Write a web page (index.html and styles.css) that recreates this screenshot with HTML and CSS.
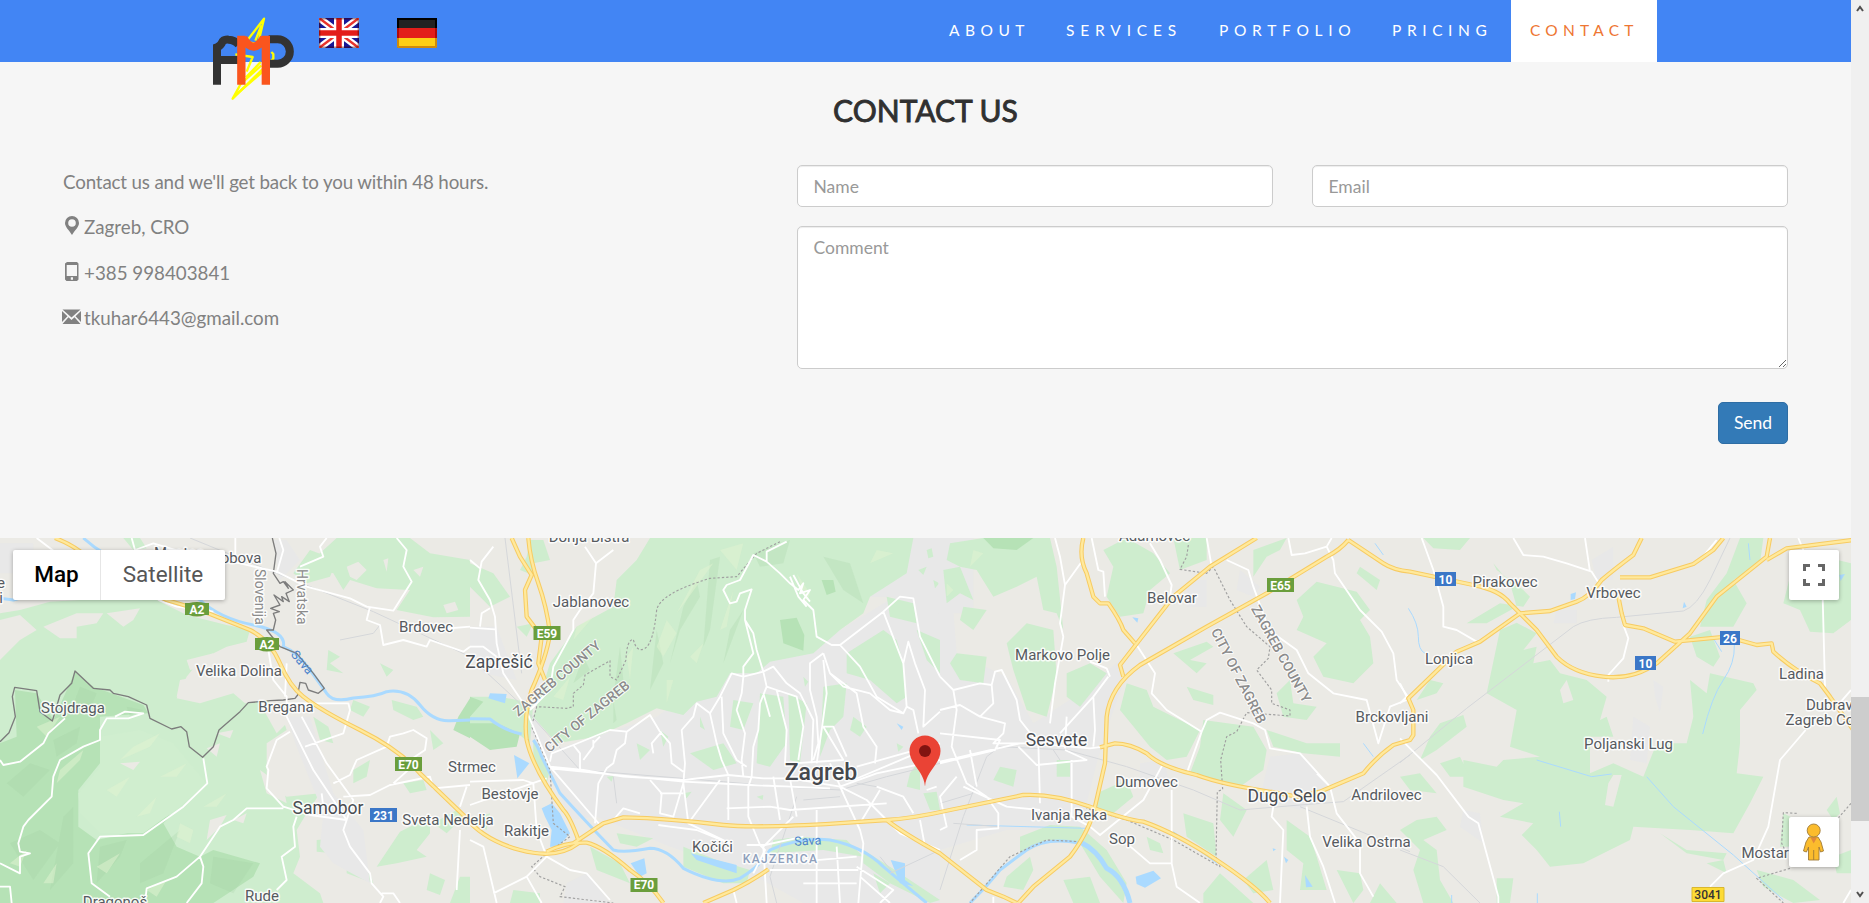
FILE: index.html
```html
<!DOCTYPE html>
<html lang="en">
<head>
<meta charset="utf-8">
<title>AMP - Contact</title>
<link rel="stylesheet" href="styles.css">
</head>
<body>
<div class="window">
<div class="page">
  <header class="navbar">
    <div class="brand">
      <svg class="logo" viewBox="66 48 252 252" aria-label="AMP">
        <g fill="none" stroke="#ff0" stroke-width="7" stroke-linejoin="round"><path d="M222 56L168 126L204 132ZM214 76L196 122"/><path d="M136 163L188 171L170 215"/><path d="M244 156L250 162V176L128 296L152 252L214 196"/><path d="M212 186L168 232M224 210L140 282"/></g>
        <g fill="none" stroke="#333" stroke-width="24"><path d="M81 254V142Q92 138 98 124Q104 118 116 119Q134 120 146 134"/><path d="M81 180H148"/><path d="M236 118H263A36.500 36.500 0 0 1 263 191H236"/></g>
        <g fill="none" stroke="#fa551e" stroke-width="25"><path d="M154 107V254M227.500 107V254M160 114Q190 166 222 114"/></g>
      </svg>
      <svg class="flag" viewBox="0 0 40 30"><rect width="40" height="30" rx="1.500" fill="#171796"/><path d="M0 0L40 30M40 0L0 30" stroke="#fff" stroke-width="7"/><path d="M0 0L40 30M40 0L0 30" stroke="#e8332c" stroke-width="2.500"/><path d="M20 0V30M0 15H40" stroke="#fff" stroke-width="10"/><path d="M20 0V30M0 15H40" stroke="#e31d1a" stroke-width="5.500"/><rect x=".7" y=".7" width="38.600" height="28.600" rx="1.500" fill="none" stroke="#400" stroke-opacity=".45" stroke-width="1.400"/></svg>
      <svg class="flag" viewBox="0 0 40 30"><rect width="40" height="30" rx="2" fill="#222"/><path d="M0 10H40V20H0Z" fill="#e31d1a"/><path d="M0 20H40V28Q40 30 38 30H2Q0 30 0 28Z" fill="#fdce16"/><path d="M1 0V10M39 0V10M0 1H40" stroke="#000" stroke-width="2"/><path d="M1 10V20M39 10V20" stroke="#b00a0a" stroke-width="2"/><path d="M1 20V28Q1 29 2 29H38Q39 29 39 28V20" fill="none" stroke="#d08a0a" stroke-width="2"/></svg>
    </div>
    <nav class="menu">
      <a class="about">ABOUT</a><a class="services">SERVICES</a><a class="portfolio">PORTFOLIO</a><a class="pricing">PRICING</a><a class="contact active">CONTACT</a>
    </nav>
  </header>
  <section class="contact-section">
    <h2>CONTACT US</h2>
    <div class="columns">
      <div class="info">
        <p class="lead">Contact us and we'll get back to you within 48 hours.</p>
        <p><svg viewBox="0 0 19 19"><path fill-rule="evenodd" d="M10 0a7 7 0 0 0-7 7c0 4 4 7 7 12 3-5 7-8 7-12a7 7 0 0 0-7-7zm0 3.200a3.800 3.800 0 1 1 0 7.600 3.800 3.800 0 0 1 0-7.600z"/></svg>Zagreb, CRO</p>
        <p><svg viewBox="0 0 19 19"><path fill-rule="evenodd" d="M5 0H15L16.500 1.500V17.500L15 19H4.500L3 17.500V1.500ZM4.700 3V14H15V3ZM8.800 15.200V17.700H11V15.200Z"/></svg>+385 998403841</p>
        <p><svg viewBox="0 0 19 19"><path d="M.5 2.500H18.500L9.500 10.500ZM0 4L5.500 9.200L0 15ZM19 4L13.500 9.200L19 15ZM6.500 10.200L9.500 13L12.500 10.200L18.500 17H.5Z"/></svg>tkuhar6443@gmail.com</p>
      </div>
      <form class="form">
        <div class="pair"><input type="text" placeholder="Name"><input type="text" placeholder="Email"></div>
        <textarea placeholder="Comment"></textarea>
        <button type="button">Send</button>
      </form>
    </div>
  </section>
  <div class="map">
    <svg class="canvas" viewBox="0 0 1851 365">
      <defs>
        <path id="h0" d="M165 24Q220 45 260 80T500 210L600 240Q700 280 750 300Q810 330 840 400T910 500Q960 540 1080 600T1260 730L1395 860Q1450 930 1560 960T1735 940"/>
        <path id="h1" d="M175 24Q180 90 205 160T240 310Q230 380 185 480Q160 560 170 630Q190 720 280 840Q300 860 325 930M125 24L150 80L185 135L165 180L170 260L215 320L205 400L225 450M230 965Q290 935 350 938Q400 950 480 1020Q540 1060 580 1119M310 940L400 880L460 862Q600 865 760 885Q850 895 1100 880L1250 870Q1330 865 1440 840L1660 795Q1750 790 1860 830T2020 875Q2120 910 2240 990T2400 1119M700 1119L790 1080Q850 1050 895 1018M1250 870Q1300 910 1410 970L1550 1080L1600 1100L1640 1119"/>
        <path id="h2" d="M430 24Q415 80 440 130L460 200L480 220L505 220Q540 270 550 300L585 340M950 24L810 110L700 200L540 405L550 440M1225 30Q1200 60 1160 80L980 190L800 290L600 405Q510 470 500 560L495 700L465 830Q450 900 390 980L280 1070L235 1119M480 652L525 640Q570 640 620 670Q660 710 770 735Q850 765 1020 790L1070 800L1140 785L1270 730Q1310 680 1360 645L1410 630L1420 615V540L1405 505L1550 365L1620 335L1740 250L1830 243L1910 215Q1950 200 1985 150Q2020 120 2080 75L2105 24M1225 30Q1300 80 1330 100T1410 125L1600 165Q1680 180 1710 220L1790 300L1850 380Q1900 430 1990 440T2150 400L2250 310L2330 200L2480 80L2490 24M2040 142L2130 142L2260 102L2320 60L2350 24M2035 200L2045 250L2055 285L2110 295L2205 335L2360 320L2450 345L2495 340L2500 365Q2560 420 2640 460L2670 500L2740 600M2480 90L2540 55L2740 30"/>
      </defs>
      <rect width="1851" height="365" fill="#ebeae5"/>
      <!-- land cover -->
      <g transform="translate(0 -8) scale(.33333)">
        <g class="forest">
          <path d="M0 250L60 240L150 215L330 205L470 210L560 255L680 285L750 300L740 335L680 350L600 390L560 440L530 505L600 520L700 490L735 520L800 510L840 540L860 600L800 640L800 760L860 800L960 790L920 850L890 900L900 980L880 1030L960 1090L970 1119H0Z"/>
          <path d="M1010 24H1230L1290 70L1410 90V260L1300 262L1190 240L1230 180L1130 175L1050 150L1030 180L1000 130L920 110L960 70Z"/>
          <path d="M930 60L1010 90L990 140L920 160L880 130Z"/><path d="M985 360L1020 380L990 400L1030 430L980 420Z"/><path d="M1140 400L1180 420L1160 440Z"/><path d="M1060 510L1110 530L1090 560L1050 540Z"/><path d="M1175 510L1250 530L1270 560L1240 570L1180 540Z"/><path d="M940 560L985 590L1000 640L960 630Z"/><path d="M1200 905L1290 860L1290 910L1250 960L1280 980L1190 1000L1130 1010Z"/><path d="M950 930L1010 925L1020 950L1000 970L950 965Z"/><path d="M1290 1030L1335 1050L1320 1095L1280 1080Z"/><path d="M1300 880L1370 840L1390 860L1340 910Z"/><path d="M1210 760L1270 750L1280 780L1230 790Z"/><path d="M1040 1000L1110 1030L1120 1060L1040 1030Z"/><path d="M1380 1040H1410V1119H1350Z"/><path d="M1060 720L1110 690L1100 740L1060 760Z"/><path d="M1290 600L1330 640L1300 660Z"/><path d="M370 24H420L440 55L400 60Z"/>
        </g>
        <path class="forest2" d="M0 640L50 620L45 480L110 490L160 570L225 425L280 470L430 525L445 550L300 560L300 700L235 780L235 890L290 930L400 905L520 850L490 880L530 950L600 980L640 960L780 1000L760 1040L640 1119H0Z"/>
        <path class="forest2" d="M1410 505L1375 560L1360 600L1410 625Z"/>
        <path fill="#d0eecf" d="M300 620L420 600L520 640L620 760L540 830L430 910L300 910L240 850L235 790L300 710Z"/>
        <path class="town" d="M0 40H100V130H0ZM860 560L930 560L1000 790L1090 900L1110 1060L1000 1000L960 950L970 850L890 650ZM820 30H860L900 90L840 150Z"/>
        <g class="land"><path d="M0 270L60 255L110 300L60 330L0 390Z"/><path d="M130 290L230 250L310 250L290 280L230 290L230 325L180 325Z"/><path d="M540 450L590 440L620 500L530 500Z"/><path d="M320 250L420 235L400 270L370 290Z"/><path d="M560 390L640 370L620 410L570 420Z"/><path d="M630 870L680 855L660 890L620 930Z"/><path d="M360 700L420 695L400 720Z"/><path d="M620 655L660 640L650 680Z"/><path d="M780 720L850 770L860 820L800 790Z"/><path d="M650 610L700 600L690 625Z"/><path d="M780 520L860 515L860 580L830 610Z"/><path d="M700 870L740 850L730 880Z"/><path d="M1040 110L1075 95L1100 120L1070 150L1050 140ZM1150 90L1165 85L1160 125ZM1330 225L1365 215L1375 240L1340 250ZM1240 120L1270 110L1260 140Z"/></g>
        <g class="relief-d"><path d="M20 760L90 700L150 720L70 800ZM160 630L240 590L230 640L170 680ZM30 940L120 900L180 940L100 1050ZM300 950L380 930L360 980L290 1060ZM420 1000L540 900L490 1030L420 1060ZM640 980L760 1000L700 1090L630 1060ZM190 860L220 830L220 1000L150 1080ZM240 470L290 490L270 540L210 550ZM380 530L430 540L390 560Z"/></g>
        <g class="relief-l"><path d="M180 720L250 660L240 690L170 760ZM400 650L480 610L450 650L360 690ZM290 1010L360 970L320 1030ZM540 880L580 900L570 940L530 920ZM410 860L470 800L450 850ZM130 1060L170 1000L160 1060ZM30 1000L80 960L60 1010ZM480 740L560 700L530 740ZM610 830L680 790L650 830ZM110 590L180 560L140 620ZM320 780L390 740L350 800ZM440 1080L500 1050L470 1100Z"/></g>
      </g>
      <g transform="translate(470 -8) scale(.33333)">
        <path class="town" d="M60 480L200 560L250 660L560 560L740 430L900 380L1110 300L1290 190L1410 190V1119H1000L840 1030L600 950L380 860L300 870L230 700L150 540ZM0 290H80L140 450L40 430L0 380ZM1290 20H1430V200H1200ZM290 1060L350 1030L420 1119H280Z"/>
        <g class="forest">
          <path d="M540 24H1330L1310 130L1200 200L1180 250L1110 300L1030 370L900 395L860 430L780 430L740 500L680 515L640 555L560 535L470 580L380 620L260 640L190 560L240 400L320 290L430 230L440 150L500 90Z"/>
          <path d="M180 30H220L240 90L190 100L200 140L150 120L170 80Z"/><path d="M0 100L70 130L120 200L60 230L0 170Z"/><path d="M140 290L190 280L170 320Z"/>
          <path d="M1130 370L1240 300L1280 330L1300 400L1310 500L1280 520L1200 450L1130 430Z"/><path d="M1250 200L1330 220L1340 280L1260 260Z"/><path d="M870 490L940 500L950 640L900 710L860 700Z"/><path d="M955 490L1010 520L990 700L960 690Z"/><path d="M1060 470L1130 460L1120 560L1080 600L1050 680Z"/><path d="M790 510L850 520L820 600L780 590Z"/><path d="M1150 560L1190 590L1170 620L1140 600Z"/><path d="M660 670L760 640L800 700L730 720Z"/><path d="M1340 300L1410 330V430L1370 390Z"/><path d="M1320 730L1350 690V780L1310 770Z"/><path d="M1360 790L1400 785L1410 840H1380Z"/>
          <path d="M640 950L740 990L840 1020L830 1060L760 1060L640 1010ZM910 930L990 920L1130 930L1180 980L1060 960L900 970ZM1180 960L1260 1010L1410 1110L1380 1119L1260 1060L1180 1000Z"/>
          <path d="M440 910L550 925L500 950L450 940Z"/><path d="M90 500L190 520L180 640L130 600L0 600V500Z"/><path d="M190 630L240 720L230 760L190 690Z"/><path d="M130 1080L210 1090V1119H120ZM360 950L450 1000L480 1060L380 1020ZM1210 1030L1260 1060L1230 1090ZM0 870L60 850L50 900Z"/><path d="M500 640L540 660L510 690Z"/>
          <path d="M1370 60L1385 55L1390 80L1375 85ZM1345 120L1370 110L1360 135ZM1390 150L1408 160L1395 175ZM640 790L665 785L650 805ZM860 800L880 795L878 810ZM410 740L430 738L425 755ZM1280 640L1300 650L1285 665ZM1000 440L1015 455L1005 470ZM570 600L595 620L580 650ZM690 560L705 600L690 590Z"/>
        </g>
        <path class="forest2" d="M930 270L980 263L1003 315L1000 362L940 340ZM1055 150L1090 150L1097 185L1070 195ZM0 500L40 515L0 560ZM0 580L80 580L150 610L140 650L60 660L0 620Z"/>
        <g class="relief-d"><path d="M680 150L640 230L600 400L630 300L690 200ZM720 90L750 80L720 300L700 350ZM820 240L780 300L760 400ZM850 70L960 30L940 100L870 110ZM1060 80L1140 100L1180 220L1120 180ZM450 350L430 500L460 450ZM560 300L540 480L580 400ZM340 380L310 460L360 420ZM430 510L430 580L440 570Z"/></g>
        <g class="relief-l"><path d="M590 270L560 350L580 380L620 310ZM690 120L730 100L650 210L620 250ZM790 180L770 290L750 300ZM320 290L370 260L310 330ZM590 450L610 450L590 520ZM660 380L700 340L680 400ZM1220 60L1270 70L1200 100ZM980 130L1020 190L1010 220ZM750 60L820 40L800 120ZM250 500L300 440L280 510ZM470 380L490 350L480 450Z"/></g>
      </g>
      <g transform="translate(940 -8) scale(.33333)">
        <path class="town" d="M-5 24H100V250H-5ZM0 150L40 240L50 370L200 440L280 580L420 490L540 390L560 430L500 600L470 700L420 900L200 900L0 960ZM990 680L1080 670L1180 780L1080 840L960 800ZM600 700L670 690L690 760L600 760ZM900 120L960 170L940 200L890 180ZM740 150H800V230H740Z"/>
        <g class="forest">
          <path d="M30 40L130 24H330L350 110L370 300L350 250L310 240L290 140L230 170L160 200L110 120L60 110L20 90Z"/><path d="M10 120L60 110L100 210L60 190L20 220ZM70 230L140 240L100 300L60 270Z"/>
          <path d="M490 60L560 24L640 70L690 130L630 180L610 250L540 260L500 200L520 110Z"/><path d="M700 24H800V90L720 120Z"/><path d="M260 280L340 300L350 440L320 560L260 540L220 420L200 340Z"/><path d="M380 430L450 400L500 430L420 530L380 500Z"/><path d="M50 370L140 380L130 460L60 450L30 400Z"/>
          <path d="M560 460L620 480L640 530L780 600L740 680L680 690L630 650L540 540Z"/><path d="M790 570L940 590L980 660L970 720L900 770L840 760L750 730L780 650Z"/><path d="M980 600L1100 640L1200 640L1200 680L1090 670L1000 650Z"/><path d="M700 370L800 335L820 350L750 390L800 400L770 430Z"/><path d="M740 470L820 495L820 525L760 510Z"/><path d="M1130 155L1250 185L1290 240L1260 270L1290 320L1300 400L1240 460L1150 440L1120 380L1160 340L1070 300L1090 260L1070 210Z"/><path d="M940 60L1040 24L1020 60L980 80L940 140Z"/><path d="M1260 110L1320 150L1310 180L1250 130Z"/><path d="M1010 490L1050 450L1060 520L1130 530L1100 570L1030 560Z"/>
          <path d="M850 790L920 840L880 920L840 870Z"/><path d="M730 850L820 880L830 980L740 920Z"/><path d="M470 790L560 750L580 800L520 850L460 830Z"/><path d="M200 1040L270 980L280 1020L250 1080L190 1070Z"/><path d="M1040 870L1110 920L1130 980L1160 1080L1080 1080L1090 1000L1040 960Z"/><path d="M910 1050L980 990L1000 1080L940 1090Z"/><path d="M240 920L330 885L420 890L500 960L560 1060L550 1119L480 1040L420 940L320 930L240 970Z"/><path d="M370 1050L450 1040L480 1119H400ZM350 690H390V740H350ZM180 710L230 720L220 770L160 750ZM790 1090L840 1030L940 1119H790ZM620 920L660 940L670 970L630 960ZM1190 1020L1260 1030L1270 1080L1240 1119ZM1320 1060L1370 1119H1290Z"/>
        </g>
        <path class="forest2" d="M130 24H280L230 60L160 55Z"/>
        <path class="relief-l" d="M100 60L130 70L90 110ZM20 160L40 180L20 200Z"/>
      </g>
      <g transform="translate(1400 -8) scale(.33333)">
        <path class="town" d="M700 560L750 590L740 700L690 690ZM190 840L240 850L250 940L180 890ZM575 90L640 50L640 150L590 150ZM760 450L790 470L780 550L765 500ZM470 240H530V280H460Z"/>
        <g class="forest">
          <path d="M70 24H210L180 60L100 55ZM1020 24L1090 24L1080 100L1000 150L1040 220L1000 290L900 290L920 210L980 130ZM1190 60L1353 100V270L1300 310L1230 305L1200 240L1150 220Z"/>
          <path d="M300 300L350 278L410 310L370 360L410 350L400 400L450 390L480 430L560 450L620 500L600 570L620 560L640 620L570 620L570 730L640 700L730 740L770 640L860 640L880 560L870 450L920 490L930 430L1060 460L1070 480L1020 540L1020 640L1010 730L1090 740L1050 820L1000 910L870 900L700 890L690 930L550 1000L450 1010L410 960L365 915L400 880L300 860L370 820L310 810L190 770L190 690L290 710L310 690L420 680L330 650L350 540L260 490Z"/>
          <path d="M870 320L930 300L960 380L940 410L890 380ZM120 580L190 555L200 590L110 660L60 690L90 620ZM120 700L180 680L210 740L150 740ZM0 740L60 730L110 790L30 780ZM50 870L110 860L140 900L70 930L110 960L120 1050L160 1119H70L40 1020L60 960L0 900ZM290 1045H340L330 1119H290ZM780 910L860 960L980 970L970 990L860 970ZM1070 1020L1180 1050L1260 1110L1180 1119L1090 1070ZM1280 840L1310 800L1320 850L1300 870ZM1150 850L1190 870L1180 950L1140 950ZM90 450L130 460L110 490L50 510ZM200 280L300 220L370 230L390 200L370 180L290 120L280 100L330 160L350 230L260 280ZM920 1000L970 990L980 1030ZM1300 980L1353 960V1030L1310 1030Z"/>
        </g>
        <path class="land" d="M640 735H665L640 830L615 825L625 760ZM480 480L500 450L520 510L490 520Z"/>
      </g>
      <!-- water, rail and boundaries -->
      <g transform="translate(0 -8) scale(.33333)">
        <path class="river" d="M250 24Q310 80 400 110T600 210Q660 265 760 285T850 350Q890 365 930 420T980 490Q1000 520 1060 504Q1130 500 1160 485Q1220 475 1260 525Q1300 575 1350 572L1410 570M0 205L40 210L110 190"/>
        <path class="rail" d="M570 24L830 130L1120 245L1410 380M1020 330L1120 310L1140 285"/>
        <path class="border" d="M817 24L828 70L820 130L840 160L850 155L865 175L855 155L880 180L858 190L868 215L845 200L850 215L822 195L840 225L812 235L838 245L820 250L827 270L820 300L800 300L840 350L890 370L940 430L973 475L955 490L925 480L917 460L900 457L893 495L885 505L850 510L810 512L745 518L720 545L657 600L640 650L608 682L568 650L560 605L543 590L515 597L450 565L440 525L385 500L340 490L330 480L280 475L225 423L215 460L180 495L167 540L157 573L120 545L110 482L44 472L37 500L46 560L27 608L0 635"/>
      </g>
      <g transform="translate(470 -8) scale(.33333)">
        <g class="water"><path d="M60 490L110 492L105 520L55 505ZM132 675L178 700L142 745ZM215 835L245 820L270 850L300 910L265 950L240 950L245 900L225 860ZM482 1000L523 985L530 1030L510 1040ZM662 970L800 1005L800 1030L740 1010L680 990ZM1262 990L1305 1000L1305 1050L1330 1068L1290 1060ZM1280 580L1300 590L1295 600Z"/></g>
        <path class="river" d="M0 566L60 567Q100 600 155 612M190 630Q205 650 215 680L270 790Q380 910 430 960Q460 970 540 955Q590 955 640 1015Q750 1070 810 1045Q870 1010 900 960Q990 920 1080 930Q1180 950 1240 1010L1370 1119"/>
        <path class="rail" d="M105 24L155 430M20 400L150 520L330 720L760 755L930 770L1110 780L1250 740L1410 700M430 740L440 820M920 1119L900 1040L980 800M1000 810L1110 800M1160 760L1220 770M1230 980L1270 1030M1260 1030L1410 960"/>
        <path class="bound" d="M930 35L860 70L800 140L720 145Q570 190 560 240Q550 340 525 355Q500 370 490 328Q470 330 468 390L440 450L420 440V392L345 435L340 465L310 490V530L290 535L200 530L185 590L240 720L250 880L300 920L230 970L185 1010L210 1040L285 1070L270 1100L430 1119"/>
      </g>
      <g transform="translate(940 -8) scale(.33333)">
        <path class="water" d="M587 1040L640 1022L663 1045L615 1073L590 1062ZM577 262L595 265L592 278ZM1095 1035L1118 1070L1098 1072ZM1032 980L1045 990L1038 1000ZM998 955L1008 958L1000 964Z"/>
        <path class="river" d="M90 1119Q140 1070 180 1020L260 960Q320 920 420 940"/><path d="M425 938Q470 960 500 1015Q550 1040 570 1119" class="river wide"/>
        <path class="stream" d="M700 905L830 1000M80 885L440 895M1305 40L1330 75M1270 640L1300 680"/>
        <path class="rail" d="M0 1080L70 860L140 680L180 650L380 660L560 710L760 780L900 840L1080 825L1210 815L1410 675M1080 830L1410 965M0 820L100 790M40 880L180 890M340 660L360 690"/>
        <path class="bound" d="M745 45L740 80L720 118L800 130L820 110L870 210L920 290L990 350L985 385L950 420L995 480L995 520L1050 540L1050 558L920 548L890 605L860 620L842 690L848 778L832 785L828 980L840 1010L700 930L560 870L440 835M440 900L420 935L320 930L210 980L90 1119"/>
      </g>
      <g transform="translate(1400 -8) scale(.33333)">
        <path class="stream" d="M25 235Q55 280 55 320T75 370M1003 345Q1005 400 970 450T908 612M940 325L965 365M410 690L575 740L635 732M740 740L820 830L1000 975L1150 1110M1045 40L1050 90M478 845L482 890M412 1090V1119M155 1095V1119"/>
        <path class="water" d="M512 192L528 187L525 207L512 210ZM852 215L860 230L848 235ZM1318 135L1335 132L1322 153Z"/>
        <path class="rail" d="M0 698L200 535L520 290Q560 265 650 262L850 243Q890 230 930 150L990 24M0 960L130 1010L240 1119"/>
        <path class="bound" d="M1353 820L1310 870L1270 880M1190 850L1150 848L1145 940L1155 960M1170 1015L1120 1030L1070 1045L1150 1119"/>
      </g>
      <!-- local roads -->
      <g class="roads" transform="translate(0 -8) scale(.33333)">
        <path d="M110 24L170 70L300 110M395 24L405 60L460 40L560 70L720 100L830 125L920 170L1050 205L1100 230L1180 242L1235 155L1210 110L1220 60L1190 24M830 130L850 60L838 24M706 24V90M1110 230L1100 270L1140 285L1150 345L1210 330L1280 350L1290 330L1390 365L1410 350M1290 300L1410 290M900 110L970 80L960 50L980 24M475 210L530 230L640 245"/>
        <path d="M805 360L820 450L860 500V560L940 720L1040 870L1030 900L1050 950L1110 1030L1115 1060L1150 1100L1140 1119M860 400L855 500M905 560L980 700L1060 810L1040 870L930 855L850 830L800 775L805 720L800 710L830 630L870 605M860 520L1045 520L1050 540L1030 610L915 650M1000 760L1050 735L1070 690L1160 650L1170 620L1210 610L1240 600L1280 625L1275 660L1230 690M1030 800L1110 795L1170 765L1290 740L1300 775L1410 765M1180 760L1230 715M1380 830L1400 770M850 835L740 835L700 870L660 890L600 980L530 1040L440 1075L435 1119M600 980L610 1010L605 1060L560 1119M890 860L880 890L885 950L845 980L860 1050L830 1080M1380 900L1370 1080M1145 1090H1180L1200 1119M965 790L970 830"/>
        <path d="M0 690L10 705L60 695L130 640L145 610L195 565M345 560L375 545L430 550L385 565L320 565L300 600L300 630L250 650L180 690L160 740L155 800L85 870L70 890L55 940L60 965L90 970L60 980L60 1030L0 1000M610 685L622 760L550 830L430 915L300 920L265 970L275 1060L330 1100M0 1070L30 1070L35 1119"/>
      </g>
      <g class="roads" transform="translate(470 -8) scale(.33333)">
        <path d="M70 50L35 95L25 150L60 210L75 260L80 340L100 430L160 520L240 710L390 885M0 90L30 115M60 235L35 250L30 290M0 293L75 298M0 350L40 350L80 380M345 50L378 100L370 190L330 240L310 270V300L250 410L240 480L180 540M378 100L430 60M240 710L340 720L460 740L640 750L775 735L880 745L960 745L1110 770L1220 730L1410 690M240 715L640 755L840 765L1080 775"/>
        <path d="M240 695L245 670L310 645L420 600L470 605L540 555L570 605L600 640L605 700L640 725M330 720V670L310 645M340 690L370 650L370 630M470 605L465 640L440 660L430 700L410 715L385 760L375 880M550 670L545 640L575 605M640 760L645 700L635 600L670 560L680 520L720 550L740 640L755 690L775 735M720 550L750 500L785 430L820 440L815 490L800 540L825 610L815 690L820 740M755 500L760 610L800 690L830 710M820 440L880 425L910 410L950 460L990 490L1030 570L1025 700M880 425L890 470L870 520L865 600L850 650L845 740L835 770V860L870 945L885 960L850 1030M890 470L920 480L940 560L950 600L945 700M920 480L980 500L1000 590L985 690M880 490L900 560M1040 700L1055 600L1070 490L1060 390M1030 690L1045 640M1110 345L1170 410L1220 500L1300 550M1060 370L1020 400V480L1040 560L1045 640M1060 370L1080 430L1160 490L1180 590L1220 650L1215 700M1080 430L1120 470L1200 490L1260 540L1300 550L1310 530L1300 400L1240 245M1110 345L1240 245L1290 200L1330 205L1350 320L1410 440M1300 400L1315 335L1335 400L1365 480L1360 590L1410 545M1310 530L1330 540L1345 610"/>
        <path d="M950 35L890 65L890 95L850 75L810 150L770 165L760 180L780 220L800 215L810 190L845 178L825 240V270L850 310L860 360L880 425M825 270L850 370L820 410V440M890 95L930 130L960 160L985 180L1000 160L990 190L1020 180L1000 210L1030 240L1040 320L1085 345L1110 345M960 140L985 200L1010 230M970 135L1000 190L1020 215"/>
        <path d="M1110 770L1170 900L1180 940L1165 1119M1110 770L1190 810L1250 870L1290 910L1410 960M1220 770L1300 800L1330 850M1170 880L1230 780M830 945H885L1000 920M900 1020H1165M1040 840V1119M1100 950L1110 1119M930 1000L1160 980M1000 1060H1160M970 860L880 950L890 1119M540 750L575 790L570 850L610 860L640 760M640 760L655 880L750 750M570 790H640M775 740V870M770 835L900 830L960 840L1250 820M565 885L600 890L680 900L780 940M655 880L780 940M910 740L930 870M960 745L980 860M1080 700L1120 790M970 700L1120 690L1060 590L1090 590L1130 680M1350 870L1365 950M0 930L40 950L80 1119M0 755L160 750L190 760L200 900L230 980L300 1020L350 1030L420 1110M0 825L230 745M170 1040L215 1119M230 980L170 1040L70 1090M790 1080L800 1119M1160 1010L1270 1080L1230 1119M1170 1040L1260 1119M1370 780L1400 770M1160 710L1320 665M1150 750L1410 640M370 640L390 620M430 870L460 835L510 850"/>
      </g>
      <g class="roads" transform="translate(940 -8) scale(.33333)">
        <path d="M345 24L360 80L375 165L360 280L370 320L345 460L330 580M375 165L425 95M455 24L475 120L490 125L495 200M630 40L660 90L695 165L690 200M800 24L815 110M860 90L925 120L940 170L980 280L1000 310L1070 360L1105 430L1180 490L1280 510L1315 640L1350 530L1400 510M1045 24L1055 75L1095 70L1160 50L1180 90L1185 130L1260 240L1325 305L1360 370L1370 450L1410 510M1160 50L1175 24M590 345L645 430L635 490L680 540L785 605L740 730M785 605L800 570L840 548L940 580L975 600L990 655L1080 670L1170 770L1190 850L1260 940V1030L1300 1100M1170 770L1130 730M505 440L460 500L360 610M460 500L465 600L460 650M510 440L500 415L450 395"/>
        <path d="M0 440L40 480L120 460L155 465L165 425L185 420L230 510L240 570L295 640M40 480L50 540L35 650L80 760L140 800L175 850V895L110 900V960L60 990M0 540L60 525L120 560L160 520L155 465M120 560L195 580L190 610L160 640H280L450 655L490 650M0 610L180 630L165 660L0 700M0 695L240 640M235 650L290 705L440 690L375 660M295 640L300 820M395 690V860L450 890L480 915L610 810L670 700M695 780V1000L630 1000L560 940M695 1000L710 1070L780 1119M380 560L375 655M90 660L110 770M50 740L0 800L20 890L0 900M70 770L200 830L300 840M1000 830L995 860L1030 900L1020 1119M1100 830L1110 920L1150 1010L1185 1119M160 1119V1100"/>
      </g>
      <g class="roads" transform="translate(1400 -8) scale(.33333)"><path d="M65 24L100 120L130 230V290L170 300L230 335M340 24L370 75L430 80L500 100L575 125L600 165M555 24L570 125M670 285L685 325L670 385L625 435V455M950 30L900 90M1195 24L1210 60M1268 200L1275 470M0 520L20 500L0 460M0 625L110 735L205 860L235 880L295 1100V1119M1353 480L1310 530M1217 600L1140 690L1105 890L1060 990L970 1030L930 1070M1353 1080L1330 1119"/></g>
      <!-- highways: casing then fill -->
      <g class="hwy">
        <use href="#h0" transform="translate(0 -8) scale(.33333)"/><use href="#h1" transform="translate(470 -8) scale(.33333)"/><use href="#h2" transform="translate(940 -8) scale(.33333)"/>
      </g>
      <g class="hwy-in">
        <use href="#h0" transform="translate(0 -8) scale(.33333)"/><use href="#h1" transform="translate(470 -8) scale(.33333)"/><use href="#h2" transform="translate(940 -8) scale(.33333)"/>
      </g>
      <!-- place names -->
      <g class="names">
        <text x="179" y="20">Mostec</text><text x="241" y="25">obova</text><text x="426" y="94">Brdovec</text><text x="239" y="137.500">Velika Dolina</text><text x="73" y="175">Stojdraga</text><text x="286" y="174">Bregana</text><text x="262" y="362.500">Rude</text><text x="115" y="369">Dragonoš</text><text x="448" y="286.500">Sveta Nedelja</text><text x="472" y="233.500">Strmec</text><text x="510" y="260.500">Bestovje</text><text x="526.500" y="297.500">Rakitje</text><text x="589" y="4">Donja Bistra</text><text x="591" y="69">Jablanovec</text><text x="712.500" y="313.500">Kočići</text><text x="1154.500" y="2.500">Adamovec</text><text x="1172" y="65">Belovar</text><text x="1062.500" y="122">Markovo Polje</text><text x="1146.500" y="248.500">Dumovec</text><text x="1069" y="281.500">Ivanja Reka</text><text x="1122" y="306">Sop</text><text x="1392" y="183.500">Brckovljani</text><text x="1386.500" y="261.500">Andrilovec</text><text x="1366.500" y="308.500">Velika Ostrna</text><text x="1505" y="48.500">Pirakovec</text><text x="1613.500" y="59.500">Vrbovec</text><text x="1449" y="126">Lonjica</text><text x="1801.500" y="140.500">Ladina</text><text x="1628.500" y="210.500">Poljanski Lug</text><text class="from" x="1806" y="172">Dubrava</text><text class="from" x="1785.500" y="187">Zagreb Cou</text><text x="1767" y="320">Mostari</text><text x="1" y="50">e</text><text x="1" y="65">i</text>
        <g class="mid"><text x="328" y="276">Samobor</text><text x="499" y="129.500">Zaprešić</text><text x="1056.500" y="208">Sesvete</text><text x="1287" y="263.500">Dugo Selo</text></g>
        <text class="city" x="821" y="242">Zagreb</text>
        <g class="area"><text transform="translate(560 144) rotate(-40)">ZAGREB COUNTY</text><text transform="translate(590 182) rotate(-39)">CITY OF ZAGREB</text><text transform="translate(1277 118) rotate(61)">ZAGREB COUNTY</text><text transform="translate(1234.500 140) rotate(63)">CITY OF ZAGREB</text></g>
        <g class="country"><text transform="translate(254.500 31) rotate(90)">Slovenija</text><text transform="translate(296.500 31) rotate(90)">Hrvatska</text></g>
        <text class="district" x="780.500" y="325">KAJZERICA</text>
        <g class="rivername"><text x="808" y="307" transform="rotate(-3 808 307)">Sava</text><text transform="translate(299 127) rotate(50)">Sava</text></g>
      </g>
      <!-- road shields -->
      <g class="shields">
        <path fill="#6a9e3c" d="M185 65h4q8-2 16 0h4v12h-4q-8 3-16 0h-4ZM255 100h4q8-2 16 0h4v12h-4q-8 3-16 0h-4ZM395 219h27v14h-27ZM533.500 88h27v14h-27ZM630.500 340h27v14h-27ZM1267 40h27v14h-27Z"/>
        <path fill="#3b77c7" d="M370 270h27v14h-27ZM1435 34h21v14h-21ZM1635 118h21v14h-21ZM1720 93h20v14h-20Z"/><path fill="#fddb35" stroke="#d9b72e" d="M1692 349.500h32v14h-32Z"/>
        <text x="197" y="75.500">A2</text><text x="267" y="111">A2</text><text x="408.500" y="230.500">E70</text><text x="547" y="99.500">E59</text><text x="644" y="351">E70</text><text x="1280.500" y="51.500">E65</text><text x="383.500" y="281.500">231</text><text x="1445.500" y="45.500">10</text><text x="1645.500" y="129.500">10</text><text x="1730" y="104.500">26</text><text x="1708" y="361">3041</text>
      </g>
      <path d="M925 248.500C924 233 909.500 226 909.500 213a15.500 15.500 0 0 1 31 0C940.500 226 926 233 925 248.500Z" fill="#ea4335"/><circle cx="925" cy="213" r="6" fill="#811411"/>
    </svg>
    <div class="map-type"><span class="on">Map</span><span>Satellite</span></div>
    <div class="map-tools">
      <span class="tool"><svg width="24" height="24" viewBox="0 0 24 24" fill="none" stroke="#666" stroke-width="3"><path d="M2.500 8V2.500H8M16 2.500H21.500V8M21.500 16V21.500H16M8 21.500H2.500V16"/></svg></span>
      <span class="tool"><svg width="24" height="38" viewBox="0 0 24 38" stroke="#a07a35" stroke-width=".9"><path d="M7 14H16L19 19L21.500 28L18.500 29L17 24V37H6.500V24L4.500 29L1.500 28L4 19Z" fill="#fbbc2d"/><path d="M11.700 27V37" fill="none"/><path d="M8.500 14.500H15L11.700 20.500Z" fill="#e2893b" stroke="none"/><circle cx="11.700" cy="7.500" r="6.500" fill="#fbbc2d"/></svg></span>
    </div>
  </div>
</div>
<div class="scrollbar"><svg viewBox="0 0 18 18"><path d="M6 11L9 7L12 11"/></svg><div class="thumb"></div><svg class="down" viewBox="0 0 18 18"><path d="M6 7L9 11L12 7"/></svg></div>
</div>
</body>
</html>
```

FILE: styles.css
```css
* { box-sizing: border-box; }
body { margin: 0; font-family: Lato, sans-serif; background: #f6f6f6; color: #818181; }
.window { display: flex; width: 1869px; height: 903px; overflow: hidden; }
.page { width: 1851px; height: 903px; display: flex; flex-direction: column; background: #f6f6f6; }

.navbar { height: 62px; flex: none; background: #4285f4; display: flex; justify-content: space-between; padding: 0 194px 0 212px; }
.brand { display: flex; align-items: flex-start; }
.logo { width: 84px; height: 84px; margin: 16px 23px 0 0; flex: none; position: relative; z-index: 2; }
.flag { width: 40px; height: 30px; margin: 18px 38px 0 0; }
.menu { display: flex; }
.menu a { height: 62px; padding: 0 0 2px 19px; line-height: 60px; font-size: 15.5px; color: #fff; white-space: nowrap; }
.about { width: 117px; letter-spacing: 5.5px; }
.services { width: 153px; letter-spacing: 5.85px; }
.portfolio { width: 173px; letter-spacing: 5.7px; }
.pricing { width: 138px; letter-spacing: 5.6px; }
.contact { width: 146px; letter-spacing: 5.2px; }
.menu .active { background: #fff; color: #ee7632; }

.contact-section { height: 476px; flex: none; }
h2 { margin: 0; padding-top: 30px; height: 103px; text-align: center; font-size: 30px; line-height: 36px; font-weight: 400; color: #303030; -webkit-text-stroke: 0.9px #303030; }
.columns { display: flex; justify-content: space-between; padding: 0 63px; }
.info { font-size: 18.75px; }
.info p { margin: 0; height: 45.4px; line-height: 33px; display: flex; align-items: flex-start; white-space: nowrap; }
.info .lead { letter-spacing: -0.16px; }
.info svg { width: 19px; height: 19px; margin: 6px 3px 0 -1px; fill: #818181; }
.form { width: 991px; display: flex; flex-direction: column; }
.pair { display: flex; justify-content: space-between; }
input, textarea { border: 1px solid #ccc; border-radius: 5px; background: #fff; font: 17.5px/25px Lato, sans-serif; box-shadow: inset 0 1px 1px rgba(0,0,0,.075); padding: 7px 15.5px; }
input { width: 476px; height: 42px; }
textarea { height: 143px; margin-top: 19px; padding-top: 8px; }
::placeholder { color: #999; opacity: 1; }
button { align-self: flex-end; width: 70px; height: 42px; margin-top: 33px; padding: 0 0 2px; background: #337ab7; border: 1px solid #2e6da4; border-radius: 5px; color: #fff; font: 17.5px Lato, sans-serif; }

.map { position: relative; height: 365px; overflow: hidden; }
.canvas { display: block; width: 1851px; height: 365px; font-family: Roboto, sans-serif; }
.town { fill: #e8e8e8; }
.land { fill: #ebeae5; }
.forest { fill: #ceedce; }
.forest2 { fill: #b6e2b6; }
.relief-d { fill: #9fcf9f; fill-opacity: .22; }
.relief-l { fill: #e2f3d2; fill-opacity: .5; }
.water { fill: #aadaff; }
.river, .stream, .rail, .border, .bound, .roads, .hwy, .hwy-in { fill: none; stroke-linejoin: round; }
.river { stroke: #aadaff; stroke-width: 9; }
.wide { stroke-width: 15; }
.stream { stroke: #aadaff; stroke-width: 3; }
.rail { stroke: #d5d7da; stroke-width: 3; }
.border { stroke: #7c7c7c; stroke-width: 4; }
.bound { stroke: #a0a0a0; stroke-width: 3.5; stroke-dasharray: 7 6; }
.roads { stroke: #fff; stroke-width: 5.5; }
.hwy { stroke: #f7cb62; stroke-width: 13; }
.hwy-in { stroke: #ffe99c; stroke-width: 7; }
.shields text { font-size: 12px; font-weight: 700; text-anchor: middle; fill: #fff; }
.shields text:last-child { fill: #333; font-weight: 500; }
.names { font-size: 15px; fill: #565a60; text-anchor: middle; stroke: #fff; stroke-opacity: .85; stroke-width: 3px; paint-order: stroke; stroke-linejoin: round; }
.from { text-anchor: start; }
.mid { font-size: 17.5px; fill: #4a4d53; }
.city { font-size: 23px; font-weight: 500; fill: #45484d; }
.area { font-size: 13.7px; font-weight: 500; fill: #8c8c8c; stroke-width: 2px; }
.country { font-size: 14px; fill: #8b8b8b; text-anchor: start; }
.district { font-size: 12px; font-weight: 500; letter-spacing: 1.4px; fill: #8e9fbb; }
.rivername { font-size: 12.5px; fill: #4d84cb; stroke: none; }
.map-type { position: absolute; left: 13px; top: 12px; display: flex; height: 50px; background: #fff; border-radius: 2px; box-shadow: 0 1px 4px rgba(0,0,0,.3); font: 22.5px/49px Roboto, sans-serif; color: #565656; }
.map-type span { width: 124px; text-align: center; }
.map-type .on { width: 88px; border-right: 1px solid #e6e6e6; color: #000; font-weight: 500; }
.map-tools { position: absolute; right: 12px; top: 12px; display: flex; flex-direction: column; gap: 217px; }
.tool { width: 50px; height: 50px; display: grid; place-items: center; background: #fff; border-radius: 2px; box-shadow: 0 1px 4px rgba(0,0,0,.3); }

.scrollbar { width: 18px; height: 903px; background: #f0f0f0; display: flex; flex-direction: column; }
.scrollbar svg { width: 18px; height: 18px; fill: none; stroke: #505050; stroke-width: 2; }
.scrollbar .down { margin-top: auto; }
.thumb { height: 124px; margin-top: 679px; background: #cdcdcd; }
```
